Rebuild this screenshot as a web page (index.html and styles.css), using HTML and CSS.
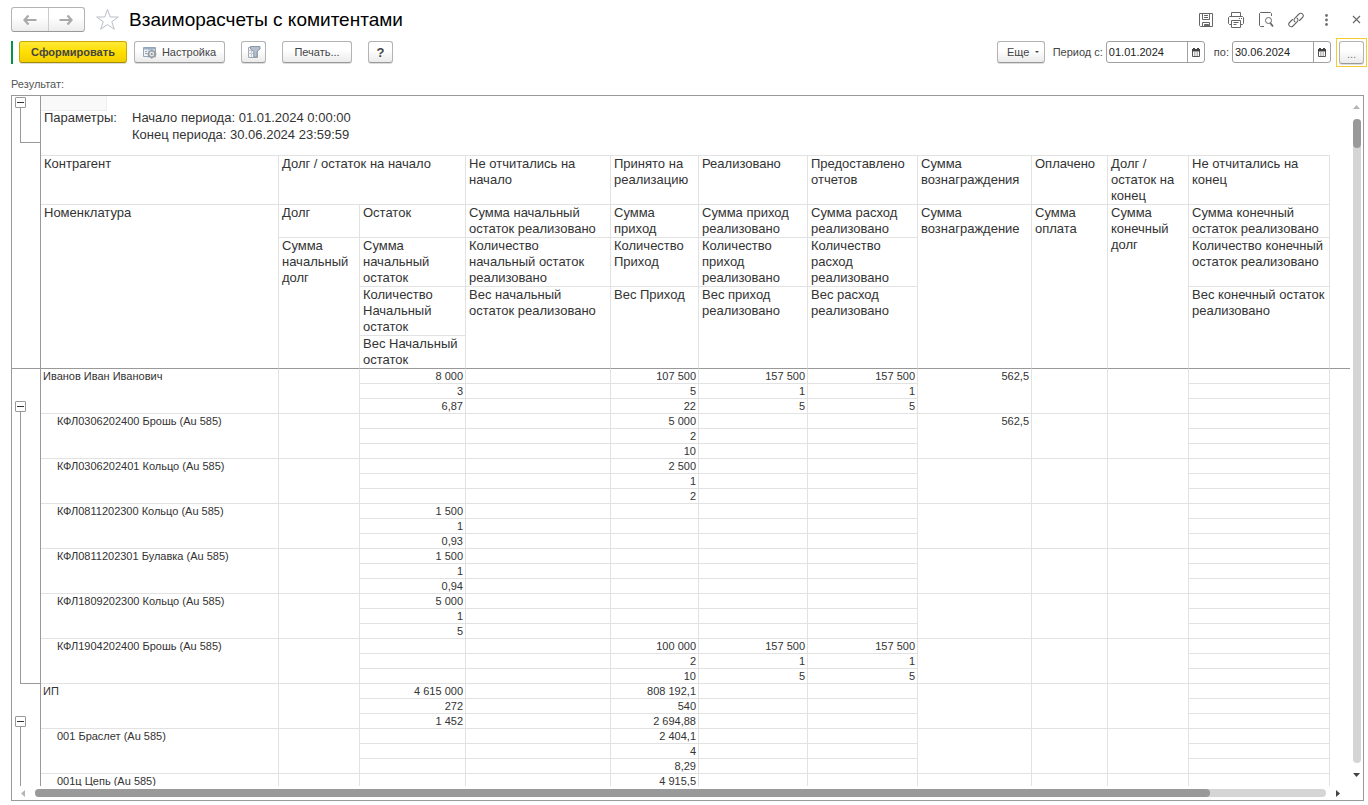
FILE: index.html
```html
<!DOCTYPE html>
<html lang="ru">
<head>
<meta charset="utf-8">
<title>Взаиморасчеты с комитентами</title>
<link rel="stylesheet" href="styles.css">
</head>
<body>
<div class="window">
  <header class="titlebar">
    <div class="nav">
      <button type="button" aria-label="Назад"><svg width="16" height="12" viewBox="0 0 16 12"><path d="M6.500 1.500 2.500 6l4 4.500M3 6h11.500" fill="none" stroke="#a9a9a9" stroke-width="2.200"/></svg></button>
      <button type="button" aria-label="Вперед"><svg width="16" height="12" viewBox="0 0 16 12"><path d="M9.500 1.500l4 4.500-4 4.500M13 6H1.500" fill="none" stroke="#a9a9a9" stroke-width="2.200"/></svg></button>
    </div>
    <button type="button" class="plain star" aria-label="В избранное"><svg width="25" height="23" viewBox="0 0 25 23"><path d="M12.500 1.500 15.200 9H23.300L16.800 13.700 19.300 21.200 12.500 16.600 5.700 21.200 8.200 13.700 1.700 9H9.800Z" fill="#fff" stroke="#b9bec6"/></svg></button>
    <h1>Взаиморасчеты с комитентами</h1>
    <div class="tools">
      <button type="button" class="plain" aria-label="Сохранить"><svg width="16" height="16" viewBox="0 0 16 16" fill="none" stroke="#666"><path d="M1.500 1.500h13v13h-12l-1-1zM4.500 1.500v6h7v-6M6 3.500h4M6 5.500h4M4.500 14.500v-4h7v4"/><path d="M6.500 12.500h4v1.500h-4z" fill="#666"/></svg></button>
      <button type="button" class="plain" aria-label="Печать"><svg width="16" height="16" viewBox="0 0 16 16" fill="none" stroke="#666"><path d="M3.500 4.500v-4h9v4M3.500 12.500h-2l-1-1v-6l1-1h13l1 1v6l-1 1h-2M3.500 8.500h9v7h-9zM5.500 10.500h5M5.500 12.500h3M11 6.500h1M13 6.500h1"/></svg></button>
      <button type="button" class="plain" aria-label="Просмотр"><svg width="16" height="16" viewBox="0 0 16 16" fill="none" stroke="#666"><path d="M6 14.500H2.500l-1-1v-12l1-1h10l1 1v2.500"/><circle cx="10.500" cy="8.500" r="3"/><path d="m12.300 11 2.700 3.500" stroke-width="1.800"/></svg></button>
      <button type="button" class="plain" aria-label="Ссылка"><svg width="16" height="16" viewBox="0 0 16 16" fill="none" stroke="#666" stroke-width="1.100" stroke-linecap="round"><path d="M7 9.800C5.700 8.700 5.700 7.300 6.700 6.300l4.300-4.300c1-1 2.600-1 3.500 0s1 2.500 0 3.500l-3 3M9 6.200c1.300 1.100 1.300 2.500.3 3.500L5 14c-1 1-2.600 1-3.500 0s-1-2.500 0-3.500l3-3"/></svg></button>
      <button type="button" class="plain" aria-label="Меню"><svg width="16" height="16" viewBox="0 0 16 16" fill="#707070"><circle cx="8.500" cy="3.500" r="1.400"/><circle cx="8.500" cy="8" r="1.400"/><circle cx="8.500" cy="12.500" r="1.400"/></svg></button>
      <button type="button" class="plain" aria-label="Закрыть"><svg width="16" height="16" viewBox="0 0 16 16"><path d="m5 4 7 7m0-7-7 7" stroke="#666" stroke-width="1.100"/></svg></button>
    </div>
  </header>

  <div class="commands">
    <span class="marker"></span>
    <button type="button" class="btn primary">Сформировать</button>
    <button type="button" class="btn settings"><svg width="14" height="13" viewBox="0 0 14 13"><path d="M.5 1.500h12v9H.5z" fill="#eef2f7" stroke="#93a5bb"/><path d="M1 2h11v1.500H1z" fill="#9db0c7"/><path d="M2 5.500h2M2 7.500h2M6 2v2" stroke="#93a5bb"/><circle cx="8.800" cy="8" r="3.200" fill="#e4e4e4" stroke="#9a9fa6" stroke-width="1.600"/><path d="M8.800 3.200v1.500M8.800 11.300v1.500M4 8h1.500M12.100 8h1.500M5.400 4.600l1 1M11.200 10.400l1 1M12.200 4.600l-1 1M6.400 10.400l-1 1" stroke="#8d939b"/><circle cx="8.800" cy="8" r="1" fill="#8d939b"/></svg>Настройка</button>
    <button type="button" class="btn filter" aria-label="Отбор"><svg width="14" height="14" viewBox="0 0 14 14"><path d="M1.500 2.500h9v10h-9z" fill="#f2f4f6" stroke="#9da8b4"/><path d="M1.500 5.500h9M1.500 8.500h9M4.500 3v9" stroke="#c3cad2"/><path d="M3.500 1.500h9.500v2.500L10 6.500V12L6.800 12V6.500L3.500 4z" fill="#b4c0cc" stroke="#8b98a6"/></svg></button>
    <button type="button" class="btn print">Печать...</button>
    <button type="button" class="btn help">?</button>
    <div class="period">
      <button type="button" class="btn more">Еще<svg width="4" height="2" viewBox="0 0 4 2"><path d="M0 0h4L2 2z" fill="#444"/></svg></button>
      <label for="from">Период с:</label>
      <span class="date"><input id="from" type="text" value="01.01.2024"><button type="button" aria-label="Календарь"><svg width="8" height="9" viewBox="0 0 8 9"><path d="M.5 2v6.500h7V2" fill="none" stroke="#555"/><path d="M0 1h8v2.500H0zM1 0h2v1H1zM5 0h2v1H5z" fill="#444"/><path d="M2 5h1M3.500 5h1M5 5h1M2 7h1M3.500 7h1M5 7h1" stroke="#777"/></svg></button></span>
      <label for="to">по:</label>
      <span class="date"><input id="to" type="text" value="30.06.2024"><button type="button" aria-label="Календарь"><svg width="8" height="9" viewBox="0 0 8 9"><path d="M.5 2v6.500h7V2" fill="none" stroke="#555"/><path d="M0 1h8v2.500H0zM1 0h2v1H1zM5 0h2v1H5z" fill="#444"/><path d="M2 5h1M3.500 5h1M5 5h1M2 7h1M3.500 7h1M5 7h1" stroke="#777"/></svg></button></span>
      <span class="focus"><button type="button" class="btn choose">...</button></span>
    </div>
  </div>

  <div class="caption">Результат:</div>

  <main class="sheet">
    <div class="pane">
      <div class="gutter">
        <div class="frozen"><div class="group params-group"><button type="button" class="toggle" aria-label="Свернуть"></button><span class="bracket"></span></div></div>
        <div class="group first-group"><button type="button" class="toggle" aria-label="Свернуть"></button><span class="bracket"></span></div>
        <div class="group next-group"><button type="button" class="toggle" aria-label="Свернуть"></button><span class="bracket"></span></div>
      </div>
      <div class="content">
        <div class="params">
          <span class="cursor"></span>
          <span class="params-title">Параметры:</span>
          <span>Начало периода: 01.01.2024 0:00:00<br>Конец периода: 30.06.2024 23:59:59</span>
        </div>
        <table>
          <colgroup><col class="c-name"><col class="c-debt"><col class="c-rest"><col class="c-open"><col class="c-recv"><col class="c-sold"><col class="c-rep"><col class="c-fee"><col class="c-paid"><col class="c-debt"><col class="c-end"><col></colgroup>
          <thead>
            <tr class="h3 top"><th>Контрагент</th><th colspan="2">Долг / остаток на начало</th><th>Не отчитались на начало</th><th>Принято на реализацию</th><th>Реализовано</th><th>Предоставлено отчетов</th><th>Сумма вознаграждения</th><th>Оплачено</th><th>Долг / остаток на конец</th><th>Не отчитались на конец</th><td class="rest"></td></tr>
            <tr class="h2"><th rowspan="5" class="last">Номенклатура</th><th>Долг</th><th>Остаток</th><th>Сумма начальный остаток реализовано</th><th>Сумма приход</th><th>Сумма приход реализовано</th><th>Сумма расход реализовано</th><th rowspan="5" class="last">Сумма вознаграждение</th><th rowspan="5" class="last">Сумма оплата</th><th rowspan="5" class="last">Сумма конечный долг</th><th>Сумма конечный остаток реализовано</th><td rowspan="5" class="rest last"></td></tr>
            <tr class="h3"><th rowspan="4" class="last">Сумма начальный долг</th><th>Сумма начальный остаток</th><th>Количество начальный остаток реализовано</th><th>Количество Приход</th><th>Количество приход реализовано</th><th>Количество расход реализовано</th><th>Количество конечный остаток реализовано</th></tr>
            <tr class="h3"><th>Количество Начальный остаток</th><th rowspan="3" class="last">Вес начальный остаток реализовано</th><th rowspan="3" class="last">Вес Приход</th><th rowspan="3" class="last">Вес приход реализовано</th><th rowspan="3" class="last">Вес расход реализовано</th><th rowspan="3" class="last">Вес конечный остаток реализовано</th></tr>
            <tr class="h2"><th rowspan="2" class="last">Вес Начальный остаток</th></tr>
            <tr class="h0"></tr>
          </thead>
          <tbody>
            <tr><th rowspan="3">Иванов Иван Иванович</th><td rowspan="3"></td><td>8 000</td><td></td><td>107 500</td><td>157 500</td><td>157 500</td><td rowspan="3">562,5</td><td rowspan="3"></td><td rowspan="3"></td><td></td></tr>
            <tr><td>3</td><td></td><td>5</td><td>1</td><td>1</td><td></td></tr>
            <tr><td>6,87</td><td></td><td>22</td><td>5</td><td>5</td><td></td></tr>
          </tbody>
          <tbody class="item">
            <tr><th rowspan="3">КФЛ0306202400 Брошь (Au 585)</th><td rowspan="3"></td><td></td><td></td><td>5 000</td><td></td><td></td><td rowspan="3">562,5</td><td rowspan="3"></td><td rowspan="3"></td><td></td></tr>
            <tr><td></td><td></td><td>2</td><td></td><td></td><td></td></tr>
            <tr><td></td><td></td><td>10</td><td></td><td></td><td></td></tr>
          </tbody>
          <tbody class="item">
            <tr><th rowspan="3">КФЛ0306202401 Кольцо (Au 585)</th><td rowspan="3"></td><td></td><td></td><td>2 500</td><td></td><td></td><td rowspan="3"></td><td rowspan="3"></td><td rowspan="3"></td><td></td></tr>
            <tr><td></td><td></td><td>1</td><td></td><td></td><td></td></tr>
            <tr><td></td><td></td><td>2</td><td></td><td></td><td></td></tr>
          </tbody>
          <tbody class="item">
            <tr><th rowspan="3">КФЛ0811202300 Кольцо (Au 585)</th><td rowspan="3"></td><td>1 500</td><td></td><td></td><td></td><td></td><td rowspan="3"></td><td rowspan="3"></td><td rowspan="3"></td><td></td></tr>
            <tr><td>1</td><td></td><td></td><td></td><td></td><td></td></tr>
            <tr><td>0,93</td><td></td><td></td><td></td><td></td><td></td></tr>
          </tbody>
          <tbody class="item">
            <tr><th rowspan="3">КФЛ0811202301 Булавка (Au 585)</th><td rowspan="3"></td><td>1 500</td><td></td><td></td><td></td><td></td><td rowspan="3"></td><td rowspan="3"></td><td rowspan="3"></td><td></td></tr>
            <tr><td>1</td><td></td><td></td><td></td><td></td><td></td></tr>
            <tr><td>0,94</td><td></td><td></td><td></td><td></td><td></td></tr>
          </tbody>
          <tbody class="item">
            <tr><th rowspan="3">КФЛ1809202300 Кольцо (Au 585)</th><td rowspan="3"></td><td>5 000</td><td></td><td></td><td></td><td></td><td rowspan="3"></td><td rowspan="3"></td><td rowspan="3"></td><td></td></tr>
            <tr><td>1</td><td></td><td></td><td></td><td></td><td></td></tr>
            <tr><td>5</td><td></td><td></td><td></td><td></td><td></td></tr>
          </tbody>
          <tbody class="item">
            <tr><th rowspan="3">КФЛ1904202400 Брошь (Au 585)</th><td rowspan="3"></td><td></td><td></td><td>100 000</td><td>157 500</td><td>157 500</td><td rowspan="3"></td><td rowspan="3"></td><td rowspan="3"></td><td></td></tr>
            <tr><td></td><td></td><td>2</td><td>1</td><td>1</td><td></td></tr>
            <tr><td></td><td></td><td>10</td><td>5</td><td>5</td><td></td></tr>
          </tbody>
          <tbody>
            <tr><th rowspan="3">ИП</th><td rowspan="3"></td><td>4 615 000</td><td></td><td>808 192,1</td><td></td><td></td><td rowspan="3"></td><td rowspan="3"></td><td rowspan="3"></td><td></td></tr>
            <tr><td>272</td><td></td><td>540</td><td></td><td></td><td></td></tr>
            <tr><td>1 452</td><td></td><td>2 694,88</td><td></td><td></td><td></td></tr>
          </tbody>
          <tbody class="item">
            <tr><th rowspan="3">001 Браслет (Au 585)</th><td rowspan="3"></td><td></td><td></td><td>2 404,1</td><td></td><td></td><td rowspan="3"></td><td rowspan="3"></td><td rowspan="3"></td><td></td></tr>
            <tr><td></td><td></td><td>4</td><td></td><td></td><td></td></tr>
            <tr><td></td><td></td><td>8,29</td><td></td><td></td><td></td></tr>
          </tbody>
          <tbody class="item">
            <tr><th>001ц Цепь (Au 585)</th><td></td><td></td><td></td><td>4 915,5</td><td></td><td></td><td></td><td></td><td></td><td></td></tr>
          </tbody>
        </table>
      </div>
    </div>
    <div class="vbar">
      <svg width="7" height="4" viewBox="0 0 7 4"><path d="M3.500 0 7 4H0z" fill="#b5b5b5"/></svg>
      <div class="track"><div class="thumb" style="height:4.5%"></div></div>
      <svg width="7" height="4" viewBox="0 0 7 4"><path d="M0 0h7L3.500 4z" fill="#444"/></svg>
    </div>
    <div class="hbar">
      <svg width="4" height="7" viewBox="0 0 4 7"><path d="M0 3.500 4 0v7z" fill="#b5b5b5"/></svg>
      <div class="track"><div class="thumb" style="width:91%"></div></div>
      <svg width="4" height="7" viewBox="0 0 4 7"><path d="M4 3.500 0 0v7z" fill="#444"/></svg>
    </div>
  </main>
</div>
</body>
</html>
```
FILE: styles.css
```css
* { box-sizing: border-box; }

body {
  margin: 0;
  background: #fff;
  color: #333;
  font: 11px "Liberation Sans", Arial, sans-serif;
}

button, input { font: inherit; color: inherit; margin: 0; }
svg { display: block; flex: none; }

.window {
  display: flex;
  flex-direction: column;
  height: 100vh;
  padding: 5px 4px 4px 11px;
  overflow: hidden;
}

/* Title row */
.titlebar { display: flex; align-items: center; height: 29px; }
.nav {
  display: flex;
  width: 74px;
  height: 25px;
  border: 1px solid #b3b3b3;
  border-bottom-color: #999;
  border-radius: 3px;
  background: linear-gradient(#fff 40%, #ececec);
}
.nav button {
  flex: 1;
  display: flex;
  align-items: center;
  justify-content: center;
  padding: 0;
  border: 0;
  background: none;
}
.nav button + button { border-left: 1px solid #ccc; }
.plain { display: flex; padding: 0; border: 0; background: none; }
.star { margin-left: 10px; }
h1 {
  margin: 0 0 0 9px;
  color: #000;
  font-size: 19px;
  font-weight: 400;
  white-space: nowrap;
}
.tools { display: flex; gap: 14px; margin-left: auto; }

/* Command row */
.commands { display: flex; align-items: center; height: 36px; }
.marker { width: 2px; height: 23px; margin-right: 6px; background: #009646; }
.btn {
  display: flex;
  align-items: center;
  justify-content: center;
  height: 22px;
  padding: 0;
  border: 1px solid #b3b3b3;
  border-bottom-color: #999;
  border-radius: 3px;
  background: linear-gradient(#fff 40%, #ebebeb);
  box-shadow: 0 1px 0 #ddd;
  color: #444;
  font-size: 11px;
  white-space: nowrap;
}
.primary {
  width: 108px;
  border-color: #c9ab00;
  border-bottom-color: #a68d00;
  background: linear-gradient(#ffe93a, #ffdf00 50%, #f2ce00);
  font-weight: 700;
}
.settings { gap: 5px; width: 91px; margin-left: 7px; }
.filter { width: 25px; margin-left: 16px; }
.print { width: 70px; margin-left: 16px; }
.help { width: 25px; margin-left: 16px; font-size: 13px; font-weight: 700; }
.period { display: flex; align-items: center; margin-left: auto; }
.more { gap: 6px; width: 48px; padding-left: 5px; margin-right: 8px; }
.period label { margin-right: 3px; color: #444; white-space: nowrap; }
.date {
  display: flex;
  width: 99px;
  height: 22px;
  margin-right: 9px;
  border: 1px solid #a0a0a0;
  border-radius: 3px;
  background: #fff;
  overflow: hidden;
}
.date input {
  flex: 1;
  min-width: 0;
  padding: 0 2px;
  border: 0;
  outline: 0;
  background: none;
  color: #222;
}
.date button {
  display: flex;
  align-items: center;
  justify-content: center;
  width: 17px;
  padding: 0;
  border: 0;
  border-left: 1px solid #a0a0a0;
  background: none;
}
.focus {
  padding: 2px;
  margin: 0 -3px 0 -4px;
  border: 1px solid #f4cd2a;
}
.choose { width: 25px; height: 23px; padding-top: 4px; color: #777; }

.caption { height: 25px; padding-top: 8px; color: #555; line-height: 13px; }

/* Spreadsheet */
.sheet {
  flex: 1;
  min-height: 0;
  display: grid;
  grid-template-columns: minmax(0, 1fr) 13px;
  grid-template-rows: minmax(0, 1fr) 14px;
  border: 1px solid #999;
}
.pane { display: flex; overflow: hidden; }
.gutter {
  display: flex;
  flex-direction: column;
  flex: none;
  width: 29px;
  border-right: 1px solid #999;
}
.frozen { flex: none; height: 273px; padding-top: 1px; border-bottom: 1px solid #999; }
.group { display: flex; flex-direction: column; padding-left: 3px; }
.toggle {
  width: 11px;
  height: 11px;
  padding: 0;
  border: 1px solid #999;
  border-radius: 1px;
  background: linear-gradient(#333, #333) center / 7px 1px no-repeat #fff;
}
.bracket { flex: 1; margin-left: 5px; border: solid #999; border-width: 0 0 1px 1px; }
.params-group { height: 46px; }
.first-group { flex: none; height: 283px; margin-top: 32px; }
.next-group { flex: 1; margin-top: 32px; }
.next-group .bracket { border-bottom: 0; }

.content { flex: 1; min-width: 0; }
.params {
  display: grid;
  grid-template-columns: 88px 1fr;
  grid-template-rows: 13px 46px;
  padding-left: 3px;
  font-size: 13px;
  line-height: 17px;
}
.cursor {
  grid-column: 1 / -1;
  width: 66px;
  height: 15px;
  margin-left: -3px;
  border: solid #eee;
  border-width: 0 1px 1px 0;
  background: #f9f9f9;
}

table { width: 100%; table-layout: fixed; border-collapse: separate; border-spacing: 0; }
.c-name { width: 238px; }
.c-debt { width: 81px; }
.c-rest { width: 106px; }
.c-open { width: 145px; }
.c-recv { width: 88px; }
.c-sold { width: 109px; }
.c-rep { width: 110px; }
.c-fee { width: 114px; }
.c-paid { width: 76px; }
.c-end { width: 141px; }

th, td {
  padding: 0 2px;
  border: solid #e2e2e2;
  border-width: 0 1px 1px 0;
  font-weight: 400;
  text-align: left;
  vertical-align: top;
}
thead th { padding: 0 3px; font-size: 13px; line-height: 16px; }
thead .top th { border-top-width: 1px; }
thead .rest { border-right: 0; border-bottom-color: transparent; }
thead .last { border-bottom-color: #999; }
.h3 { height: 49px; }
.h3.top { height: 50px; }
.h2 { height: 33px; }
.h0 { height: 0; }
tbody tr { height: 15px; }
tbody th, tbody td { height: 15px; line-height: 14px; white-space: nowrap; }
tbody td { text-align: right; }
.item th { padding-left: 16px; }

/* Scroll bars */
.vbar, .hbar { display: flex; align-items: center; justify-content: space-between; }
.vbar { flex-direction: column; padding: 9px 0 9px; gap: 10px; }
.hbar { padding: 0 10px 0 9px; gap: 10px; }
.track { flex: 1; border-radius: 4px; background: #d5d5d5; }
.thumb { border-radius: 4px; background: #999; }
.vbar .track { width: 8px; }
.hbar .track { height: 8px; }
.hbar .thumb { height: 8px; }
```
